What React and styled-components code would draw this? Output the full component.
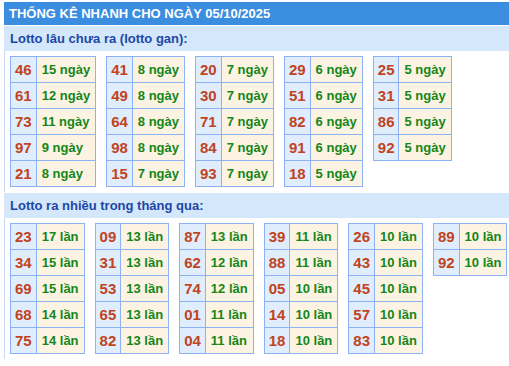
import styled, { createGlobalStyle } from "styled-components";

const GlobalStyle = createGlobalStyle`
  body {
    margin: 0;
    background: #ffffff;
    font-family: "Liberation Sans", Arial, sans-serif;
  }
`;

const Panel = styled.div`
  margin: 2px 0 0 4px;
`;

const Title = styled.div`
  height: 23px;
  line-height: 23px;
  padding-left: 5px;
  background: #3b8de0;
  color: #ffffff;
  font-size: 13px;
  font-weight: 700;
  white-space: nowrap;
`;

const SubTitle = styled.div`
  height: 25px;
  line-height: 25px;
  margin-top: 1px;
  padding-left: 6px;
  background: #d4e7fb;
  color: #1d47a6;
  font-size: 13px;
  font-weight: 700;
`;

const Group = styled.div`
  display: flex;
  align-items: flex-start;
  gap: 10px;
  border-left: 1px solid #c9daf0;
  padding: 5px 0 5px 5px;
`;

const Table = styled.table`
  border-collapse: collapse;
`;

const NumCell = styled.td`
  height: 25px;
  padding: 0 4px;
  border: 1px solid #8db2f4;
  background: #dfedfd;
  color: #c0441e;
  font-size: 15px;
  font-weight: 700;
  text-align: center;
`;

const ValCell = styled.td`
  height: 25px;
  padding: 0 5px;
  border: 1px solid #8db2f4;
  background: #fdf3e2;
  color: #14861a;
  font-size: 13px;
  font-weight: 700;
  white-space: nowrap;
`;

const gan = [
  [["46", 15], ["61", 12], ["73", 11], ["97", 9], ["21", 8]],
  [["41", 8], ["49", 8], ["64", 8], ["98", 8], ["15", 7]],
  [["20", 7], ["30", 7], ["71", 7], ["84", 7], ["93", 7]],
  [["29", 6], ["51", 6], ["82", 6], ["91", 6], ["18", 5]],
  [["25", 5], ["31", 5], ["86", 5], ["92", 5]],
];

const nhieu = [
  [["23", 17], ["34", 15], ["69", 15], ["68", 14], ["75", 14]],
  [["09", 13], ["31", 13], ["53", 13], ["65", 13], ["82", 13]],
  [["87", 13], ["62", 12], ["74", 12], ["01", 11], ["04", 11]],
  [["39", 11], ["88", 11], ["05", 10], ["14", 10], ["18", 10]],
  [["26", 10], ["43", 10], ["45", 10], ["57", 10], ["83", 10]],
  [["89", 10], ["92", 10]],
];

const StatTables = ({ data, unit }) => (
  <Group>
    {data.map((col, i) => (
      <Table key={i}>
        <tbody>
          {col.map(([num, count]) => (
            <tr key={num}>
              <NumCell>{num}</NumCell>
              <ValCell>
                {count} {unit}
              </ValCell>
            </tr>
          ))}
        </tbody>
      </Table>
    ))}
  </Group>
);

export default function App() {
  return (
    <>
      <GlobalStyle />
      <Panel>
        <Title>THỐNG KÊ NHANH CHO NGÀY 05/10/2025</Title>
        <SubTitle>Lotto lâu chưa ra (lotto gan):</SubTitle>
        <StatTables data={gan} unit="ngày" />
        <SubTitle>Lotto ra nhiều trong tháng qua:</SubTitle>
        <StatTables data={nhieu} unit="lần" />
      </Panel>
    </>
  );
}
